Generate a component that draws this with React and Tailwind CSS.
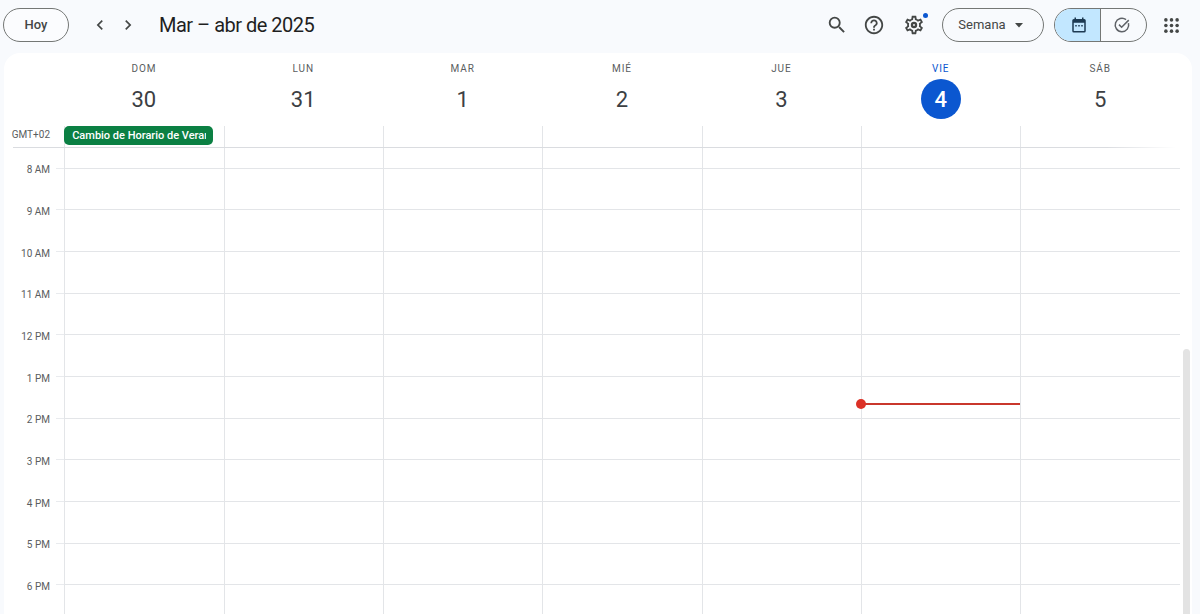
const days = [
  ["DOM", "30"],
  ["LUN", "31"],
  ["MAR", "1"],
  ["MIÉ", "2"],
  ["JUE", "3"],
  ["VIE", "4", true],
  ["SÁB", "5"],
];
const hours = ["8 AM", "9 AM", "10 AM", "11 AM", "12 PM", "1 PM", "2 PM", "3 PM", "4 PM", "5 PM", "6 PM", ""];
const font = { fontFamily: "Roboto, 'Noto Sans', sans-serif" };

function Cells({ now }) {
  return (
    <div className="grid grid-cols-7 w-[1115.6px] h-full">
      {days.map((d, i) => (
        <div key={i} className="relative border-l border-b border-[#e3e5e8] h-full">
          {now && i === 5 && (
            <div className="absolute left-[-1px] right-0 top-[26px] h-[2px] bg-[#c9372c]">
              <div className="absolute left-[-5px] top-[-4px] w-[10px] h-[10px] rounded-full bg-[#dc3126]" />
            </div>
          )}
        </div>
      ))}
    </div>
  );
}

function Row({ label, h, now }) {
  return (
    <div className={"flex items-stretch shrink-0 " + h}>
      <div className="w-[46px] flex items-end justify-end shrink-0">
        <div className="h-0 flex items-center translate-y-[1px] text-[10px] text-[#5a5d60] whitespace-nowrap">{label}</div>
      </div>
      <div className="w-[6px] shrink-0" />
      <div className={"w-[8.2px] shrink-0 border-b border-[#e9ebee]"} />
      <Cells now={now} />
    </div>
  );
}

export default function App() {
  return (
    <div className="w-[1200px] h-[614px] overflow-hidden bg-[#f8fafd] flex flex-col text-[#1f1f1f]" style={font}>
      <header className="h-[53px] shrink-0 flex items-start pt-[8px]">
        <button className="ml-[3px] w-[66px] h-[34px] rounded-full border border-[#747775] bg-white/40 text-[13px] font-medium text-[#444746] flex items-center justify-center">
          Hoy
        </button>
        <div className="ml-[21px] w-[20px] h-[34px] flex items-center justify-center text-[#444746]">
          <svg width="20" height="20" viewBox="0 0 24 24" fill="currentColor"><path d="M15.41 7.41 14 6l-6 6 6 6 1.41-1.41L10.83 12z" /></svg>
        </div>
        <div className="ml-[8px] w-[20px] h-[34px] flex items-center justify-center text-[#444746]">
          <svg width="20" height="20" viewBox="0 0 24 24" fill="currentColor"><path d="M10 6 8.59 7.41 13.17 12l-4.58 4.59L10 18l6-6z" /></svg>
        </div>
        <div className="ml-[21px] h-[34px] flex items-center text-[20px] tracking-[-0.5px] leading-none text-[#1f1f1f] whitespace-nowrap">Mar – abr de 2025</div>

        <div className="ml-auto flex items-start">
          <div className="w-[22px] h-[34px] flex items-center justify-center text-[#444746]">
            <svg width="22" height="22" viewBox="0 0 24 24" fill="currentColor"><path d="M15.5 14h-.79l-.28-.27A6.471 6.471 0 0 0 16 9.5 6.5 6.5 0 1 0 9.5 16c1.61 0 3.09-.59 4.23-1.57l.27.28v.79l5 4.99L20.49 19l-4.99-5zm-6 0C7.01 14 5 11.99 5 9.5S7.01 5 9.5 5 14 7.01 14 9.5 11.99 14 9.5 14z" /></svg>
          </div>
          <div className="ml-[15px] w-[22px] h-[34px] flex items-center justify-center text-[#444746]">
            <svg width="22" height="22" viewBox="0 0 24 24" fill="currentColor"><path d="M11 18h2v-2h-2v2zm1-16C6.48 2 2 6.48 2 12s4.48 10 10 10 10-4.48 10-10S17.52 2 12 2zm0 18c-4.41 0-8-3.59-8-8s3.59-8 8-8 8 3.59 8 8-3.59 8-8 8zm0-14c-2.21 0-4 1.79-4 4h2c0-1.1.9-2 2-2s2 .9 2 2c0 2-3 1.75-3 5h2c0-2.25 3-2.5 3-5 0-2.21-1.79-4-4-4z" /></svg>
          </div>
          <div className="relative ml-[18px] w-[22px] h-[34px] flex items-center justify-center text-[#444746]">
            <svg width="22" height="22" viewBox="0 0 24 24" fill="currentColor"><path d="M19.43 12.98c.04-.32.07-.64.07-.98 0-.34-.03-.66-.07-.98l2.11-1.65c.19-.15.24-.42.12-.64l-2-3.46c-.09-.16-.26-.25-.44-.25-.06 0-.12.01-.17.03l-2.49 1c-.52-.4-1.08-.73-1.69-.98l-.38-2.65C14.46 2.18 14.25 2 14 2h-4c-.25 0-.46.18-.49.42l-.38 2.65c-.61.25-1.17.59-1.69.98l-2.49-1c-.06-.02-.12-.03-.18-.03-.17 0-.34.09-.43.25l-2 3.46c-.13.22-.07.49.12.64l2.11 1.65c-.04.32-.07.65-.07.98 0 .33.03.66.07.98l-2.11 1.65c-.19.15-.24.42-.12.64l2 3.46c.09.16.26.25.44.25.06 0 .12-.01.17-.03l2.49-1c.52.4 1.08.73 1.69.98l.38 2.65c.03.24.24.42.49.42h4c.25 0 .46-.18.49-.42l.38-2.65c.61-.25 1.17-.59 1.69-.98l2.49 1c.06.02.12.03.18.03.17 0 .34-.09.43-.25l2-3.46c.12-.22.07-.49-.12-.64l-2.11-1.65zm-1.98-1.71c.04.31.05.52.05.73 0 .21-.02.43-.05.73l-.14 1.13.89.7 1.08.84-.7 1.21-1.27-.51-1.04-.42-.9.68c-.43.32-.84.56-1.25.73l-1.06.43-.16 1.13-.2 1.35h-1.4l-.19-1.35-.16-1.13-1.06-.43c-.43-.18-.83-.41-1.23-.71l-.91-.7-1.06.43-1.27.51-.7-1.21 1.08-.84.89-.7-.14-1.13c-.03-.31-.05-.54-.05-.74s.02-.43.05-.73l.14-1.13-.89-.7-1.08-.84.7-1.21 1.27.51 1.04.42.9-.68c.43-.32.84-.56 1.25-.73l1.06-.43.16-1.13.2-1.35h1.39l.19 1.35.16 1.13 1.06.43c.43.18.83.41 1.23.71l.91.7 1.06-.43 1.27-.51.7 1.21-1.07.85-.89.7.14 1.13zM12 8.5a3.5 3.5 0 1 0 0 7 3.5 3.5 0 0 0 0-7zm0 2.5a1 1 0 1 1 0 2 1 1 0 0 1 0-2z" fillRule="evenodd" /></svg>
            <div className="absolute right-[-3px] top-[5px] w-[5px] h-[5px] rounded-full bg-[#0b57d0]" />
          </div>
          <button className="ml-[17px] w-[102px] h-[34px] rounded-full border border-[#747775] text-[13px] text-[#444746] flex items-center justify-center gap-[8px] pr-[4px]">
            Semana
            <svg width="10" height="10" viewBox="0 0 10 10" fill="currentColor"><path d="M1 3h8L5 7.5z" /></svg>
          </button>
          <div className="ml-[10px] w-[93px] h-[34px] rounded-full border border-[#747775] flex overflow-hidden">
            <div className="w-[46px] h-full bg-[#c2e7ff] border-r border-[#747775] flex items-center justify-center pl-[2px] text-[#1d3a52]">
              <svg width="18" height="18" viewBox="0 0 24 24" fill="currentColor"><path d="M19 4h-1V2h-2v2H8V2H6v2H5a2 2 0 0 0-2 2v14a2 2 0 0 0 2 2h14a2 2 0 0 0 2-2V6a2 2 0 0 0-2-2zM5 20V9h14v11H5zM7 12h2v2H7zm4 0h2v2h-2zm4 0h2v2h-2z" /></svg>
            </div>
            <div className="flex-1 flex items-center justify-center pr-[3px] text-[#5f6368]">
              <svg width="18" height="18" viewBox="0 0 24 24" fill="none" stroke="currentColor" strokeWidth="2"><path d="M20.6 9.5A9 9 0 1 1 17.4 4.8" /><path d="m8 11.5 3.5 3.5L21 5.5" /></svg>
            </div>
          </div>
          <div className="ml-[16px] mr-[21px] w-[16px] h-[34px] flex items-center justify-center text-[#444746]">
            <svg width="15" height="15" viewBox="0 0 16 16" fill="currentColor">
              {[2, 8, 14].map((y) => [2, 8, 14].map((x) => <circle key={x + "-" + y} cx={x} cy={y} r="1.9" />))}
            </svg>
          </div>
        </div>
      </header>

      <main className="ml-[4px] w-[1188px] flex-1 min-h-0 rounded-t-2xl bg-white flex flex-col overflow-hidden">
        <div className="h-[73px] shrink-0 flex pl-[60.2px]">
          <div className="grid grid-cols-7 w-[1115.6px]">
            {days.map(([name, num, today]) => (
              <div key={name} className="flex flex-col items-center pt-[10px]">
                <div className={"text-[10px] leading-[12px] tracking-[0.09em] " + (today ? "text-[#0b57d0]" : "text-[#5a5d60]")}>{name}</div>
                <div className={"mt-[4px] w-[40px] h-[40px] rounded-full flex items-center justify-center text-[22px] " + (today ? "bg-[#0b57d0] text-white font-medium" : "text-[#3c4043]")}>{num}</div>
              </div>
            ))}
          </div>
        </div>

        <div className="h-[21px] shrink-0 flex">
          <div className="w-[46px] shrink-0 flex justify-end pt-[3px] text-[10px] leading-[12px] text-[#5a5d60] whitespace-nowrap">GMT+02</div>
          <div className="w-[14.2px] shrink-0" />
          <div className="grid grid-cols-7 w-[1115.6px]">
            {days.map(([name], i) => (
              <div key={name} className="border-l border-[#e3e5e8] h-full">
                {i === 0 && (
                  <div className="ml-[-1px] w-[149px] h-[19px] rounded-[5px] bg-[#0b8043] text-white text-[11px] font-medium leading-[19px] pl-[8px] pr-[7px]">
                    <div className="overflow-hidden whitespace-nowrap">Cambio de Horario de Verano</div>
                  </div>
                )}
              </div>
            ))}
          </div>
        </div>
        <div className="ml-[9px] mr-[16px] h-px shrink-0 bg-[linear-gradient(90deg,#dadce0_0%,#dadce0_94%,#ffffff_100%)]" />

        <div className="flex-1 min-h-0 flex overflow-hidden">
          <div className="flex flex-col">
            <Row label={hours[0]} h="h-[20.8px]" />
            {hours.slice(1).map((h, i) => (
              <Row key={i} label={h} h="h-[41.67px]" now={i === 5} />
            ))}
          </div>
          <div className="ml-[3.2px] mt-[201px] w-[7px] h-[400px] rounded-t bg-[#e3e3e3]" />
        </div>
      </main>
    </div>
  );
}
